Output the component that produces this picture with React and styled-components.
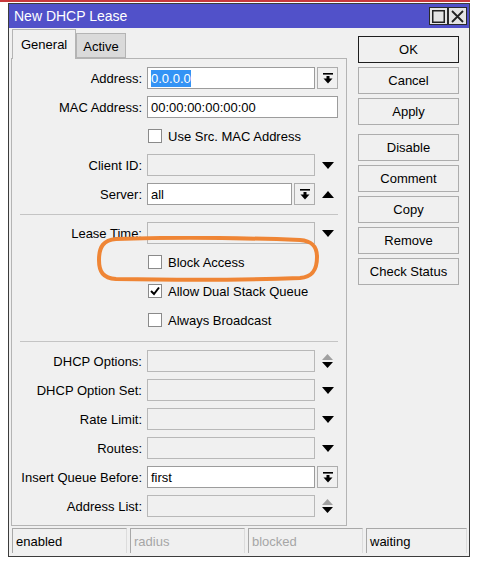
import React from 'react';
import styled, { createGlobalStyle } from 'styled-components';

const GlobalStyle = createGlobalStyle`
  body {
    margin: 0;
    background: #ffffff;
    font-family: "Liberation Sans", Arial, sans-serif;
    font-size: 13px;
    color: #000;
  }
`;

const TopLine = styled.div`
  width: 470px;
  height: 2px;
  background: #c8383c;
`;

const Window = styled.div`
  box-sizing: border-box;
  width: 462px;
  height: 554px;
  margin: 1px 0 0 8px;
  border: 1px solid #3c3c3c;
  background: #f0f0f0;
  display: flex;
  flex-direction: column;
`;

const TitleBar = styled.div`
  height: 24px;
  flex-shrink: 0;
  background: #5151c9;
  color: #fff;
  font-size: 14px;
  display: flex;
  align-items: center;
  justify-content: space-between;
  padding: 0 2px 0 5px;
`;

const TitleButtons = styled.div`
  display: flex;
`;

const TitleButton = styled.div`
  box-sizing: border-box;
  width: 19px;
  height: 18px;
  background: #e4e4e4;
  border: 1px solid #2a2a2a;
  display: flex;
  align-items: center;
  justify-content: center;
`;

const Body = styled.div`
  display: flex;
  padding: 0 0 0 2px;
`;

const LeftCol = styled.div`
  width: 336px;
  display: flex;
  flex-direction: column;
`;

const Tabs = styled.div`
  display: flex;
  align-items: flex-end;
  height: 30px;
  padding-left: 1px;
`;

const Tab = styled.div`
  box-sizing: border-box;
  height: ${(p) => (p.$active ? '30px' : '25px')};
  padding: 0 ${(p) => (p.$active ? '8px' : '6px')};
  background: ${(p) => (p.$active ? '#f0f0f0' : '#dadada')};
  border: 1px solid #b4b4b4;
  border-bottom: ${(p) => (p.$active ? 'none' : '1px solid #b4b4b4')};
  margin-bottom: ${(p) => (p.$active ? '-1px' : '0')};
  position: relative;
  z-index: ${(p) => (p.$active ? 1 : 0)};
  display: flex;
  align-items: center;
  padding-top: ${(p) => (p.$active ? '0' : '2px')};
  font-size: 13px;
`;

const Panel = styled.div`
  position: relative;
  box-sizing: border-box;
  height: 468px;
  border: 1px solid #b4b4b4;
  padding: 8px 8px 0 0;
  display: flex;
  flex-direction: column;
  gap: 7px;
`;

const Row = styled.div`
  display: flex;
  align-items: center;
  height: 22px;
`;

const Label = styled.div`
  width: 130px;
  margin-right: 5px;
  text-align: right;
  white-space: nowrap;
`;

const Field = styled.div`
  box-sizing: border-box;
  flex: 1;
  height: 22px;
  border: 1px solid ${(p) => (p.$enabled ? '#9c9c9c' : '#b8b8b8')};
  background: ${(p) => (p.$enabled ? '#ffffff' : '#f0f0f0')};
  display: flex;
  align-items: center;
  padding-left: 3px;
  white-space: nowrap;
`;

const Selected = styled.span`
  background: #3393f5;
  color: #fff;
  padding: 1px 0;
`;

const DropButton = styled.div`
  box-sizing: border-box;
  width: 21px;
  height: 22px;
  margin-left: 2px;
  border: 1px solid #adadad;
  background: #f0f0f0;
  display: flex;
  align-items: center;
  justify-content: center;
`;

const ArrowSlot = styled.div`
  width: 21px;
  height: 22px;
  margin-left: 2px;
  display: flex;
  align-items: center;
  justify-content: center;
`;

const CheckRow = styled.div`
  display: flex;
  align-items: center;
  height: 22px;
  padding-left: 136px;
  gap: 6px;
`;

const CheckBox = styled.div`
  box-sizing: border-box;
  width: 14px;
  height: 14px;
  border: 1px solid #8a8a8a;
  background: #fff;
  display: flex;
  align-items: center;
  justify-content: center;
`;

const Separator = styled.div`
  height: 1px;
  margin: ${(p) => p.$margin};
  margin-left: 8px;
  background: #c4c4c4;
`;

const Highlight = styled.svg`
  position: absolute;
  left: 84px;
  top: 177px;
  pointer-events: none;
`;

const RightCol = styled.div`
  width: 101px;
  margin-left: 11px;
  padding-top: 8px;
  display: flex;
  flex-direction: column;
  gap: 4px;
`;

const Button = styled.div`
  box-sizing: border-box;
  height: 27px;
  border: 1px solid ${(p) => (p.$default ? '#1e1e1e' : '#adadad')};
  box-shadow: ${(p) => (p.$default ? 'inset 0 0 0 1px #f0f0f0' : 'none')};
  background: #f0f0f0;
  display: flex;
  align-items: center;
  justify-content: center;
  margin-top: ${(p) => (p.$spaced ? '5px' : '0')};
`;

const StatusBar = styled.div`
  display: grid;
  grid-template-columns: 115px 115px 115px 1fr;
  gap: 3px;
  height: 25px;
  margin-top: 2px;
  padding: 0 2px 0 3px;
`;

const StatusCell = styled.div`
  box-sizing: border-box;
  border-top: 1px solid #a8a8a8;
  border-left: 1px solid #a8a8a8;
  border-right: 1px solid #dcdcdc;
  display: flex;
  align-items: center;
  padding-left: 3px;
  color: ${(p) => (p.$muted ? '#a6a6a6' : '#000')};
`;

const DownArrow = () => (
  <svg width="12" height="7" viewBox="0 0 12 7">
    <polygon points="0,0 12,0 6,7" fill="#000" />
  </svg>
);

const UpArrow = () => (
  <svg width="12" height="7" viewBox="0 0 12 7">
    <polygon points="0,7 12,7 6,0" fill="#000" />
  </svg>
);

const UpDown = () => (
  <svg width="11" height="14" viewBox="0 0 11 14">
    <polygon points="0,6 11,6 5.5,0" fill="#a0a0a0" />
    <polygon points="0,8 11,8 5.5,14" fill="#000" />
  </svg>
);

const DropIcon = () => (
  <svg width="10" height="11" viewBox="0 0 10 11">
    <rect x="0" y="0" width="10" height="1.6" fill="#000" />
    <rect x="3.5" y="3" width="3" height="3" fill="#000" />
    <polygon points="0.5,5.5 9.5,5.5 5,10.5" fill="#000" />
  </svg>
);

const Tick = () => (
  <svg width="10" height="10" viewBox="0 0 10 10">
    <path d="M1 5 L4 8 L9 1.5" stroke="#000" strokeWidth="2" fill="none" />
  </svg>
);

const FieldRow = ({ label, value, enabled, trail }) => (
  <Row>
    <Label>{label}</Label>
    <Field $enabled={enabled}>{value}</Field>
    {trail}
  </Row>
);

const Check = ({ label, checked }) => (
  <CheckRow>
    <CheckBox>{checked && <Tick />}</CheckBox>
    <span>{label}</span>
  </CheckRow>
);

const buttons = ['OK', 'Cancel', 'Apply', 'Disable', 'Comment', 'Copy', 'Remove', 'Check Status'];

export default function App() {
  return (
    <>
      <GlobalStyle />
      <TopLine />
      <Window>
        <TitleBar>
          <span>New DHCP Lease</span>
          <TitleButtons>
            <TitleButton>
              <svg width="13" height="13" viewBox="0 0 13 13">
                <rect x="0.75" y="0.75" width="11.5" height="11.5" fill="none" stroke="#222" strokeWidth="1.5" />
              </svg>
            </TitleButton>
            <TitleButton>
              <svg width="13" height="13" viewBox="0 0 13 13">
                <path d="M1 1 L12 12 M12 1 L1 12" stroke="#222" strokeWidth="1.8" />
              </svg>
            </TitleButton>
          </TitleButtons>
        </TitleBar>

        <Body>
          <LeftCol>
            <Tabs>
              <Tab $active>General</Tab>
              <Tab>Active</Tab>
            </Tabs>
            <Panel>
              <FieldRow
                label="Address:"
                enabled
                value={<Selected>0.0.0.0</Selected>}
                trail={<DropButton><DropIcon /></DropButton>}
              />
              <FieldRow label="MAC Address:" enabled value="00:00:00:00:00:00" />
              <Check label="Use Src. MAC Address" />
              <FieldRow label="Client ID:" trail={<ArrowSlot><DownArrow /></ArrowSlot>} />
              <FieldRow
                label="Server:"
                enabled
                value="all"
                trail={
                  <>
                    <DropButton><DropIcon /></DropButton>
                    <ArrowSlot><UpArrow /></ArrowSlot>
                  </>
                }
              />
              <Separator $margin="2px 0 0 0" />
              <FieldRow label="Lease Time:" trail={<ArrowSlot><DownArrow /></ArrowSlot>} />
              <Check label="Block Access" />
              <Check label="Allow Dual Stack Queue" checked />
              <Check label="Always Broadcast" />
              <Separator $margin="3px 0 1px 0" />
              <FieldRow label="DHCP Options:" trail={<ArrowSlot><UpDown /></ArrowSlot>} />
              <FieldRow label="DHCP Option Set:" trail={<ArrowSlot><DownArrow /></ArrowSlot>} />
              <FieldRow label="Rate Limit:" trail={<ArrowSlot><DownArrow /></ArrowSlot>} />
              <FieldRow label="Routes:" trail={<ArrowSlot><DownArrow /></ArrowSlot>} />
              <FieldRow
                label="Insert Queue Before:"
                enabled
                value="first"
                trail={<DropButton><DropIcon /></DropButton>}
              />
              <FieldRow label="Address List:" trail={<ArrowSlot><UpDown /></ArrowSlot>} />

              <Highlight width="224" height="46" viewBox="0 0 224 46">
                <path
                  d="M20 3 C80 1 150 2 204 4 C216 5 221 10 221 21 C221 33 217 41 204 42 C150 44 80 44 20 43 C7 42 3 36 3 24 C3 10 8 4 20 3 Z"
                  fill="none"
                  stroke="#ef8535"
                  strokeWidth="4"
                />
              </Highlight>
            </Panel>
          </LeftCol>

          <RightCol>
            {buttons.map((b, i) => (
              <Button key={b} $default={i === 0} $spaced={i === 3}>
                {b}
              </Button>
            ))}
          </RightCol>
        </Body>

        <StatusBar>
          <StatusCell>enabled</StatusCell>
          <StatusCell $muted>radius</StatusCell>
          <StatusCell $muted>blocked</StatusCell>
          <StatusCell>waiting</StatusCell>
        </StatusBar>
      </Window>
    </>
  );
}
